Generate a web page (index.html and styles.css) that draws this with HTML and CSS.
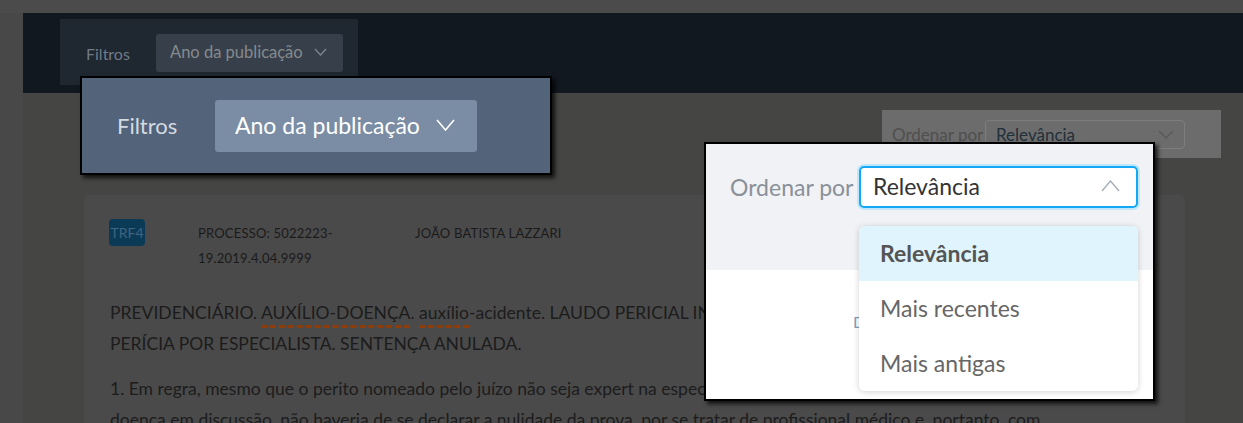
FILE: index.html
```html
<!DOCTYPE html>
<html lang="pt-BR">
	<head>
		<title>Jurisprudência - Ordenar resultados</title>
		<meta charset="UTF-8">
		<meta content="width=device-width,initial-scale=1.0" name="viewport">
		<link rel="stylesheet" href="styles.css">
	</head>
	<body>
		<div class="topbar"></div>
		<div class="shell">
			<div class="side"></div>
			<div class="main">
				<div class="header">
					<div class="filters">
						<span class="filters-label">Filtros</span>
						<span class="filters-btn">Ano da publicação
							<svg width="13" height="8" viewBox="0 0 13 8"><polyline points="1,1 6.5,7 12,1" fill="none" stroke="#7d8590" stroke-width="1.3"/></svg>
						</span>
					</div>
				</div>
				<div class="content">
					<div class="sortbar">
						<span class="sortbar-label">Ordenar por</span>
						<span class="sortbar-select">Relevância
							<svg width="16" height="9" viewBox="0 0 16 9"><polyline points="1,1 8,8 15,1" fill="none" stroke="#585858" stroke-width="1.3"/></svg>
						</span>
					</div>
					<div class="card">
						<div class="card-head">
							<span class="badge">TRF4</span>
							<span class="meta meta-proc">PROCESSO: 5022223-19.2019.4.04.9999</span>
							<span class="meta">JOÃO BATISTA LAZZARI</span>
						</div>
						<p class="ementa">PREVIDENCIÁRIO. <span class="typo">AUXÍLIO-DOENÇA</span>. <span class="typo">auxílio</span>-acidente. LAUDO PERICIAL INCOMPLETO. NECESSIDADE DE NOVA<br>PERÍCIA POR ESPECIALISTA. SENTENÇA ANULADA.</p>
						<p class="ementa">1. Em regra, mesmo que o perito nomeado pelo juízo não seja expert na especialidade médica relacionada à<br>doença em discussão, não haveria de se declarar a nulidade da prova, por se tratar de profissional médico e, portanto, com conhecimentos gerais.</p>
					</div>
				</div>
			</div>
		</div>

		<!-- destaque: filtro -->
		<div class="zoom zoom-filters">
			<span class="zf-label">Filtros</span>
			<span class="zf-btn">Ano da publicação
				<svg width="19" height="12" viewBox="0 0 19 12"><polyline points="1,1 9.5,11 18,1" fill="none" stroke="#ffffff" stroke-width="1.6"/></svg>
			</span>
		</div>

		<!-- destaque: ordenação aberta -->
		<div class="zoom zoom-sort">
			<div class="zs-top">
				<span class="zs-label">Ordenar por</span>
				<span class="zs-select">Relevância
					<svg width="19" height="12" viewBox="0 0 19 12"><polyline points="1,11 9.5,1 18,11" fill="none" stroke="#a9b1ba" stroke-width="1.5"/></svg>
				</span>
			</div>
			<div class="zs-bottom">
				<span class="zs-ghost">Detalhes</span>
			</div>
			<ul class="zs-list">
				<li class="active">Relevância</li>
				<li>Mais recentes</li>
				<li>Mais antigas</li>
			</ul>
		</div>
	</body>
</html>
```

FILE: styles.css
```css
html,body{margin:0;padding:0;}
body{width:1243px;height:423px;overflow:hidden;background:#454544;font-family:Lato,"Noto Sans",sans-serif;position:relative;}

.topbar{height:13px;background:#4b4b4b;}
.shell{display:flex;height:410px;overflow:hidden;}
.side{width:23px;flex:none;background:#484848;}
.main{flex:1;}

.header{height:80px;background:#111820;padding:6px 0 0 37px;box-sizing:border-box;}
.filters{display:inline-flex;align-items:center;width:298px;height:66px;box-sizing:border-box;padding:2px 0 0 26px;background:#1f2731;}
.filters-label{font-size:16px;color:#6f7b87;width:70px;}
.filters-btn{display:inline-flex;align-items:center;gap:11px;width:187px;height:38px;box-sizing:border-box;padding:0 0 2px 14px;background:#37404a;border-radius:3px;color:#868a8e;font-size:16.5px;}

.content{padding:17px 22px 0 61px;}
.sortbar{display:flex;align-items:center;width:339px;height:48px;margin-left:798px;box-sizing:border-box;padding:0 0 0 10px;background:#6c6c6c;}
.sortbar-label{color:#4f4f4f;font-size:17px;width:93px;}
.sortbar-select{display:flex;align-items:center;justify-content:space-between;width:200px;height:29px;box-sizing:border-box;padding:0 10px 0 10px;border:1px solid #7d7d7d;border-radius:4px;color:#22303a;font-size:17px;}

.card{width:1101px;margin-top:37px;height:260px;box-sizing:border-box;padding:24px 0 0 25px;background:#4a4a4a;border-radius:6px;}
.card-head{display:flex;align-items:flex-start;}
.badge{width:36px;height:27px;line-height:27px;text-align:center;background-color:#0a3a56;color:#3f6580;font-size:14px;border-radius:4px;}
.meta{font-size:13px;letter-spacing:0.2px;color:#1a1a1a;line-height:25px;margin-top:2px;}
.meta-proc{width:160px;margin:2px 57px 0 53px;}
.ementa{margin:26px 0 0 1px;width:1045px;font-size:17.5px;line-height:31px;color:#1c1c1c;}
.ementa + .ementa{margin-top:14px;}
.typo{text-decoration:underline dashed #8c3d0a;text-decoration-thickness:2.5px;text-underline-offset:6px;}

.zoom{position:absolute;box-sizing:border-box;border:2px solid #000;box-shadow:3px 3px 4px rgba(0,0,0,0.75);}

.zoom-filters{left:80px;top:76px;width:472px;height:99px;background:#52637a;display:flex;align-items:center;padding:0 0 0 35px;}
.zf-label{font-size:22px;color:#d5dae0;width:98px;}
.zf-btn{display:inline-flex;align-items:center;gap:16px;width:262px;height:52px;box-sizing:border-box;padding:0 0 2px 20px;background:#7a8da4;border-radius:3px;color:#fff;font-size:23px;}

.zoom-sort{left:704px;top:142px;width:451px;height:259px;background:#fff;}
.zs-top{height:126px;background:#f0f2f5;display:flex;align-items:flex-start;padding:22px 0 0 24px;box-sizing:border-box;}
.zs-label{font-size:23px;color:#8a9098;width:129px;margin-top:7px;white-space:nowrap;}
.zs-select{display:flex;align-items:center;justify-content:space-between;width:279px;height:42px;box-sizing:border-box;padding:0 16px 2px 12px;border:2px solid #12a8f3;border-radius:5px;box-shadow:0 0 0 2px #bfe6fb;background:#fff;color:#333;font-size:23px;}
.zs-bottom{padding:42px 0 0 147px;}
.zs-ghost{font-size:16px;color:#7e9fbd;}
.zs-list{position:absolute;left:153px;top:82px;width:279px;margin:0;padding:0;list-style:none;background:#fff;border-radius:6px;overflow:hidden;box-shadow:0 1px 6px rgba(0,0,0,0.18);}
.zs-list li{height:55px;line-height:55px;padding-left:21px;font-size:23px;color:#666;}
.zs-list li.active{background:#dff4fc;color:#555;font-weight:bold;}
```
